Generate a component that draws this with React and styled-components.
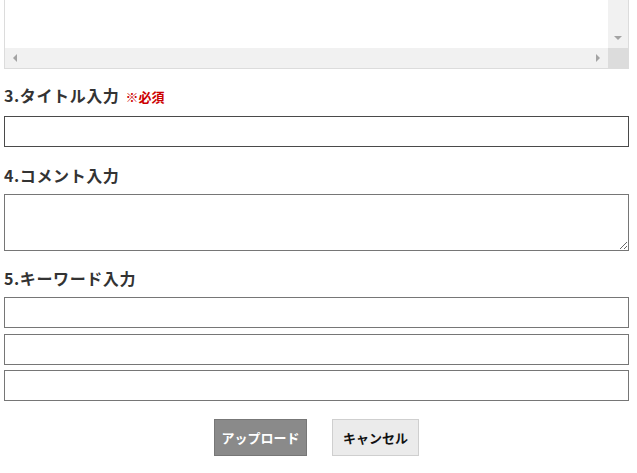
import React from "react";
import styled, { createGlobalStyle } from "styled-components";

const GlobalStyle = createGlobalStyle`
	html, body {
		margin: 0;
		padding: 0;
		background: #fff;
	}
	body {
		font-family: "Noto Sans CJK JP", "Noto Sans", sans-serif;
		color: #333;
	}
`;

const Page = styled.div`
	width: 625px;
	padding: 0 8px 16px 4px;
`;

const ScrollBox = styled.div`
	display: grid;
	grid-template-columns: 1fr 20px;
	grid-template-rows: 48px 20px;
	border: 1px solid #dcdcdc;
	border-top: none;
	background: #fff;
`;

const Pane = styled.div`
	background: #fff;
`;

const Track = styled.div`
	display: flex;
	flex-direction: ${(p) => (p.vertical ? "column" : "row")};
	justify-content: space-between;
	align-items: ${(p) => (p.vertical ? "center" : "stretch")};
	background: #f1f1f1;
`;

const ArrowButton = styled.div`
	width: 20px;
	height: 20px;
	display: flex;
	align-items: center;
	justify-content: center;
`;

const Corner = styled.div`
	background: #dcdcdc;
`;

const Arrow = ({ dir }) => {
	const pts = {
		down: "0,0 8,0 4,4",
		left: "4,0 4,8 0,4",
		right: "0,0 0,8 4,4",
	}[dir];
	const w = dir === "down" ? 8 : 4;
	const h = dir === "down" ? 4 : 8;
	return (
		<svg width={w} height={h} viewBox={`0 0 ${w} ${h}`}>
			<polygon points={pts} fill="#a3a3a3" />
		</svg>
	);
};

const Section = styled.div`
	margin-top: ${(p) => p.$space || 18}px;
`;

const Label = styled.label`
	display: block;
	font-size: 16px;
	line-height: 20px;
	letter-spacing: 0.6px;
	font-weight: bold;
	color: #333;
	margin-bottom: 9px;
`;

const Required = styled.span`
	font-size: 13px;
	letter-spacing: 0;
	color: #c00;
	margin-left: 6px;
`;

const TextInput = styled.input`
	display: block;
	box-sizing: border-box;
	width: 100%;
	height: 31px;
	margin: 0;
	padding: 2px 6px;
	border: 1px solid ${(p) => (p.dark ? "#4a4a4a" : "#767676")};
	border-radius: 0;
	font-size: 14px;
	font-family: inherit;
	outline: none;
`;

const KeywordList = styled.div`
	display: flex;
	flex-direction: column;
	gap: 5.5px;
`;

const TextArea = styled.textarea`
	display: block;
	box-sizing: border-box;
	width: 100%;
	height: 57px;
	margin: 0;
	padding: 4px 6px;
	border: 1px solid #767676;
	border-radius: 0;
	font-size: 14px;
	font-family: inherit;
	outline: none;
`;

const Buttons = styled.div`
	display: flex;
	justify-content: center;
	gap: 25px;
	margin-top: 18px;
`;

const Button = styled.button`
	width: ${(p) => (p.primary ? 93 : 87)}px;
	height: 37px;
	padding: 0;
	font-family: "Noto Sans CJK JP", sans-serif;
	font-size: 13px;
	font-weight: bold;
	border-radius: 0;
	cursor: pointer;
	color: ${(p) => (p.primary ? "#fff" : "#111")};
	background: ${(p) => (p.primary ? "#8a8a8a" : "#ebebeb")};
	border: 1px solid ${(p) => (p.primary ? "#777" : "#cfcfcf")};
`;

export default function App() {
	return (
		<Page>
			<GlobalStyle />
			<ScrollBox>
				<Pane />
				<Track vertical>
					<ArrowButton />
					<ArrowButton>
						<Arrow dir="down" />
					</ArrowButton>
				</Track>
				<Track>
					<ArrowButton>
						<Arrow dir="left" />
					</ArrowButton>
					<ArrowButton>
						<Arrow dir="right" />
					</ArrowButton>
				</Track>
				<Corner />
			</ScrollBox>

			<Section $space={16}>
				<Label htmlFor="title">
					3.タイトル入力<Required>※必須</Required>
				</Label>
				<TextInput id="title" type="text" dark />
			</Section>

			<Section $space={18}>
				<Label htmlFor="comment">4.コメント入力</Label>
				<TextArea id="comment" />
			</Section>

			<Section $space={17}>
				<Label>5.キーワード入力</Label>
				<KeywordList>
					<TextInput type="text" />
					<TextInput type="text" />
					<TextInput type="text" />
				</KeywordList>
			</Section>

			<Buttons>
				<Button primary>アップロード</Button>
				<Button>キャンセル</Button>
			</Buttons>
		</Page>
	);
}
